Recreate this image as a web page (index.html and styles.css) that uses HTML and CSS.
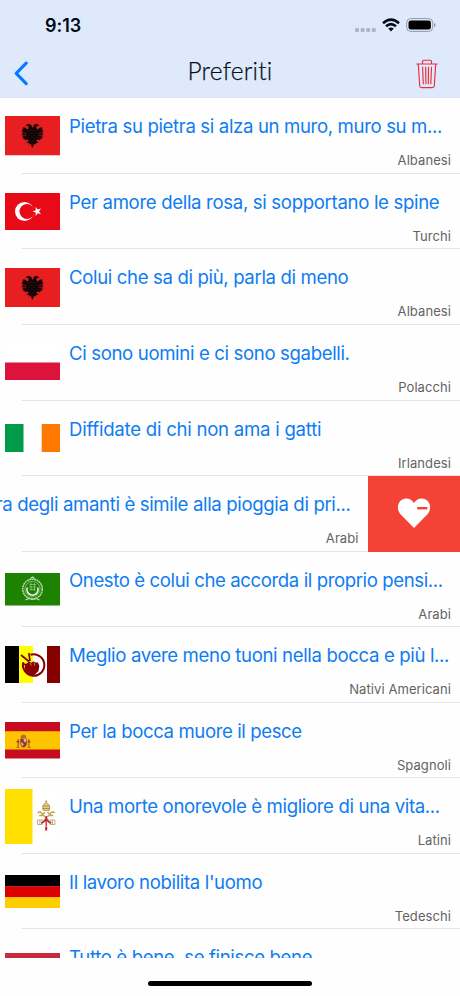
FILE: index.html
```html
<!DOCTYPE html>
<html lang="it">
<head>
<meta charset="utf-8">
<title>Preferiti</title>
<link rel="stylesheet" href="styles.css">
</head>
<body>
<svg class="defs" width="0" height="0">
  <symbol id="albania" viewBox="0 0 55 39.5">
    <path fill="#e81f20" d="M0 0h55v39.5H0z"/>
    <path fill="#160607" d="M27.500 12l-1.500-3.500-3-.7-2.500 2 2.700.4.5 1.800-1.200 1.500-2-1.800-2.700-.7 1 1.600-2 .2 1.200 1.500-1.500.7 1.400 1.200-1.500.9 1.500 1-1.400 1.200 1.700.7-1.200 1.400 1.900.3-.9 1.500 2-.2-.2 1.600 2.200-1 1.500 1.500-2.500 1.500 3 .4-.2 1.500 2.200-.7.5 2 .5 2.200 1.500-2.200.5-2 2.200.7-.2-1.500 3-.4-2.500-1.500 1.500-1.500 2.200 1-.2-1.600 2 .2-.9-1.500 1.900-.3-1.200-1.400 1.700-.7-1.400-1.200 1.500-1-1.500-.9 1.400-1.200-1.500-.7 1.200-1.500-2-.2 1-1.600-2.700.7-2 1.800-1.200-1.500.5-1.800 2.700-.4-2.500-2-3 .7z"/>
    <path stroke="#e81f20" stroke-width=".5" fill="none" d="M17 16.500l4.500 1.200M17 19.500l4.500.2M38 16.500l-4.500 1.200M38 19.500l-4.500.2M24 24l-2 2M31 24l2 2"/>
  </symbol>
</svg>
<div class="screen">
  <header class="top">
    <div class="status">
      <span class="time">9:13</span>
      <div class="indicators">
        <svg class="signal" width="21" height="5" viewBox="0 0 21 5"><g fill="#acb7c7"><rect width="4" height="4" rx="1"/><rect x="5.600" width="4" height="4" rx="1"/><rect x="11.200" width="4" height="4" rx="1"/><rect x="16.800" width="4" height="4" rx="1"/></g></svg>
        <svg class="wifi" width="18" height="14" viewBox="0 0 18 14"><g fill="none" stroke="#000b16" stroke-width="2.500"><path d="M1 5.200Q9-2 17 5.200"/><path d="M4 8.300Q9 4 14 8.300"/></g><path fill="#000b16" d="M6.200 10.600Q9 8.400 11.800 10.600L9 13.400z"/></svg>
        <svg class="battery" width="30" height="14" viewBox="0 0 30 14"><rect x=".7" y=".6" width="26" height="12.800" rx="4" fill="none" stroke="#8f9bab"/><rect x="2.500" y="2.400" width="22.400" height="9.200" rx="2.400" fill="#000"/><path d="M28 5v4.200q1.500-.5 1.500-2.100T28 5z" fill="#8f9bab"/></svg>
      </div>
    </div>
    <nav class="bar">
      <svg class="back" width="15" height="25" viewBox="0 0 15 25"><path d="M13.200 2.200L3.200 12.400l10 10.300" fill="none" stroke="#057aff" stroke-width="3.100" stroke-linecap="round" stroke-linejoin="round"/></svg>
      <h1>Preferiti</h1>
      <svg class="trash" width="22" height="30" viewBox="0 0 22 30"><g fill="none" stroke="#eb2c3c" stroke-width="1.150" stroke-linecap="round" stroke-linejoin="round"><path d="M.8 5h20.400M6.500 4.700V2.400q0-1.200 1.200-1.200h6.600q1.200 0 1.200 1.200v2.300M2.300 5.200l1.400 21.600q.1 1.800 2 1.800h10.600q1.900 0 2-1.800L19.700 5.200M6.600 8.200l.7 16.600M9.700 8.200l.2 16.600M12.500 8.200l-.2 16.600M15.500 8.200l-.7 16.600"/></g></svg>
    </nav>
  </header>
  <main class="list">
    <article class="row">
      <svg class="flag" width="55" height="39.500"><use href="#albania"/></svg>
      <div class="text"><h2><span class="q1">Pietra su pietra si alza un muro, muro su m...</span></h2><p>Albanesi</p></div>
    </article>
    <article class="row">
      <svg class="flag" width="55" height="37" viewBox="0 0 55 37"><path fill="#e80a17" d="M0 0h55v37H0z"/><circle cx="19.500" cy="18.500" r="9.500" fill="#fff"/><circle cx="22" cy="18.500" r="7.500" fill="#e80a17"/><path fill="#fff" d="M27.500 18.500l3.200-1.200-.1-3.300 2.200 2.600 3.200-1-2 2.900 2 2.800-3.200-1-2.200 2.600.1-3.300z"/></svg>
      <div class="text"><h2><span class="q2">Per amore della rosa, si sopportano le spine</span></h2><p>Turchi</p></div>
    </article>
    <article class="row">
      <svg class="flag" width="55" height="39.500"><use href="#albania"/></svg>
      <div class="text"><h2><span class="q3">Colui che sa di più, parla di meno</span></h2><p>Albanesi</p></div>
    </article>
    <article class="row">
      <svg class="flag" width="55" height="35" viewBox="0 0 55 35"><path fill="#fff" d="M0 0h55v35H0z"/><path fill="#dc143c" d="M0 17.500h55V35H0z"/></svg>
      <div class="text"><h2><span class="q4">Ci sono uomini e ci sono sgabelli.</span></h2><p>Polacchi</p></div>
    </article>
    <article class="row">
      <svg class="flag" width="55" height="28" viewBox="0 0 55 28"><path fill="#009b48" d="M0 0h18.500v28H0z"/><path fill="#ff7900" d="M36.700 0H55v28H36.700z"/></svg>
      <div class="text"><h2><span class="q5">Diffidate di chi non ama i gatti</span></h2><p>Irlandesi</p></div>
    </article>
    <article class="row swiped">
      <div class="text"><h2><span class="q6">ra degli amanti è simile alla pioggia di pri...</span></h2><p>Arabi</p></div>
      <div class="remove"><svg width="34" height="31" viewBox="0 0 34 31"><path fill="#fff" d="M17 30L3.500 16.200C-1.300 11 .5 1 9.200.4c3.500 0 6.300 1.700 7.800 4.700C18.500 2.100 21.300.4 24.800.4 33.500 1 35.300 11 30.500 16.200z"/><path fill="#f44336" d="M20.200 9h10.200v2.400H20.200z"/></svg></div>
    </article>
    <article class="row">
      <svg class="flag" width="55" height="32.500" viewBox="0 0 55 32.500"><path fill="#1c8200" d="M0 0h55v32.500H0z"/><g fill="none" stroke="#bdd9b3"><circle cx="27.500" cy="16" r="9.800" stroke-width="1.500" stroke-dasharray="2 .5"/><circle cx="27.500" cy="16" r="7.600" stroke-width=".6"/><path stroke="#e9f5e5" stroke-width="1.600" d="M22.300 14.500a5.600 5.600 0 1 0 10.400 0"/><path stroke-width=".8" stroke="#94c187" d="M24.500 11.500h6.500M24 14h7M25 16.500h5.500M26 9.500v8M29.500 10v8"/><path stroke-width="1.200" d="M20.500 27l3.500-1.500 3.500 1 3.500-1 3.500 1.500M25.500 5.500l2-1.500 2 1.500"/></g></svg>
      <div class="text"><h2><span class="q7">Onesto è colui che accorda il proprio pensi...</span></h2><p>Arabi</p></div>
    </article>
    <article class="row">
      <svg class="flag" width="55" height="37" viewBox="0 0 55 37"><path d="M0 0h14v37H0z"/><path fill="#ff0" d="M14 0h14v37H14z"/><path fill="#fff" d="M28 0h14v37H28z"/><path fill="#870000" d="M42 0h13v37H42z"/><path d="M25.500 8.800a10.700 10.700 0 1 1-7.200 7.500" fill="none" stroke="#870000" stroke-width="2"/><path d="M16 9l8 6.500M23.800 7l1.200 8M18 17.500l4 2" stroke="#870000" stroke-width="1.700"/><path fill="#870000" d="M20 18.500l4.500-3 2 1.300 2-1.500 2 1.300 2.500-.2 1.300 3.600-.8 5-2.200 2.300-2.500 2.200-5.300-1-4-4.500z"/><path d="M25 17l1.500 2.500M29 16.500l.8 3" stroke="#fff" stroke-width=".5"/></svg>
      <div class="text"><h2><span class="q8">Meglio avere meno tuoni nella bocca e più l...</span></h2><p>Nativi Americani</p></div>
    </article>
    <article class="row">
      <svg class="flag" width="55" height="36.500" viewBox="0 0 55 36.500"><path fill="#c90b22" d="M0 0h55v36.500H0z"/><path fill="#ffc400" d="M0 9.200h55v18.200H0z"/><g transform="translate(11.500 12)"><path fill="#b56b27" d="M4 2.200Q7-1 10 2.200L9.400 4H4.600zM0 12.500h3V14H0zm11 0h3V14h-3zM1 5h1.600v7H1zm10.500 0H13v7h-1.500z"/><path fill="#ad2e29" d="M3.800 4.500h6.600v5.700Q9 13.500 7 13.500t-3.200-3.300zM0 7h3v1.200H0zm11 0h3v1.200h-3z"/><path fill="#d7b798" d="M7.200 4.800h2.700v3.400H7.200zM4.200 8.500H7v3H5z"/><circle cx="7" cy="8.400" r="1.200" fill="#31578d"/></g></svg>
      <div class="text"><h2><span class="q9">Per la bocca muore il pesce</span></h2><p>Spagnoli</p></div>
    </article>
    <article class="row">
      <svg class="flag" width="55" height="55" viewBox="0 0 55 55"><path fill="#fff" d="M0 0h55v55H0z"/><path fill="#ffe000" d="M0 0h27.500v55H0z"/><g transform="translate(31.700 12)"><path fill="#e7cf72" stroke="#877535" stroke-width=".6" d="M6.500 9.500Q4.500 4 9.500 1.500 14.500 4 12.500 9.500z"/><path stroke="#a08b4d" stroke-width=".9" d="M9.500-.5v2M8.500.3h2M6 5h7M5.800 7.500h7.400"/><g fill="none"><path stroke="#c5aa4e" stroke-width="1.600" d="M5 12.500L14.500 22"/><path stroke="#aaa" stroke-width="1.500" d="M14 12.500L4.500 22"/><path stroke="#c2a047" stroke-width="1.300" d="M1 12q2-2 4 0t3-1M11 11q1 3 3 1t4 0M2.500 14.500h3.500M13 14.500h3.500"/><path stroke="#b8a578" stroke-width=".9" d="M.8 19h4.800v4.500H.8zM13.400 19h4.800v4.500h-4.800zM3.200 19v4.500M15.800 19v4.500"/><path stroke="#c51d2c" stroke-width="1.300" d="M9.500 15v10M4.500 22q4-1 5-5 1 4 5 5"/><path stroke="#c51d2c" stroke-width="2" d="M9.500 25.500v4"/></g></g></svg>
      <div class="text"><h2><span class="q10">Una morte onorevole è migliore di una vita...</span></h2><p>Latini</p></div>
    </article>
    <article class="row">
      <svg class="flag" width="55" height="33.500" viewBox="0 0 55 33.500"><path d="M0 0h55v11.500H0z"/><path fill="#dd0000" d="M0 11.200h55v11.200H0z"/><path fill="#ffce00" d="M0 22.300h55v11.200H0z"/></svg>
      <div class="text"><h2><span class="q11">Il lavoro nobilita l'uomo</span></h2><p>Tedeschi</p></div>
    </article>
    <article class="row">
      <svg class="flag" width="55" height="27.500" viewBox="0 0 55 27.500"><path fill="#c82a40" d="M0 0h55v9.200H0z"/></svg>
      <div class="text"><h2><span class="q12">Tutto è bene, se finisce bene</span></h2></div>
    </article>
  </main>
  <footer class="home"><div></div></footer>
</div>
</body>
</html>
```

FILE: styles.css
```css
* { box-sizing: border-box; }
body { margin: 0; background: #fff; font-family: Inter, "Liberation Sans", sans-serif; }
h1, h2, p { margin: 0; font-weight: 400; }
svg { display: block; flex: none; }
.defs { position: absolute; }
.screen { width: 460px; height: 996px; overflow: hidden; display: flex; flex-direction: column; background: #fefefe; }
.top { height: 98.4px; flex: none; background: #deeafb; border-bottom: 1px solid #dfe3ea; }
.status { height: 48px; padding: 0 24px 0 45px; display: flex; justify-content: space-between; align-items: flex-start; }
.time { margin-top: 15px; font-size: 18px; line-height: 22px; font-weight: 600; color: #000b16; letter-spacing: -.05px; }
.indicators { display: flex; padding-top: 18px; }
.signal { margin: 10px 6px 0 0; }
.wifi { margin-right: 6px; }
.bar { height: 49px; display: grid; grid-template-columns: 60px 1fr 60px; align-items: center; }
.back { margin-left: 13px; margin-top: 2px; }
.bar h1 { margin-top: -3px; font-family: Lato, sans-serif; font-weight: 300; -webkit-text-stroke: .25px #06101c; font-size: 24.500px; line-height: 30px; letter-spacing: .2px; text-align: center; color: #06101c; }
.trash { margin-left: 16px; margin-top: 2px; }
.list { height: 859.600px; flex: none; overflow: hidden; }
.row {
  height: 75.550px; padding-left: 5px; display: flex; align-items: center; overflow: hidden;
  background: linear-gradient(#e4e4e6, #e4e4e6) 22px 100% / 100% 1px no-repeat;
}
.text { flex: 1; min-width: 0; align-self: stretch; padding: 16px 9px 0 9px; }
.text h2 { font-size: 18.600px; line-height: 24px; letter-spacing: -.36px; color: #0f7cf2; white-space: nowrap; }
.text p { margin-top: 13px; font-size: 13px; line-height: 18px; letter-spacing: .08px; color: #636363; text-align: right; }
.q2 { letter-spacing: -.33px; }
.q5 { letter-spacing: -.25px; }
.q7, .q9 { letter-spacing: -.4px; }
.swiped { padding-left: 0; }
.swiped .text { padding-left: 0; }
.swiped h2 { display: flex; justify-content: flex-end; padding-right: 8px; }
.remove { width: 92.500px; align-self: stretch; background: #f44336; display: flex; align-items: center; justify-content: center; }
.home { flex: 1; display: flex; justify-content: center; padding-top: 23px; }
.home div { width: 164px; height: 5.500px; border-radius: 3px; background: #000; }
```
